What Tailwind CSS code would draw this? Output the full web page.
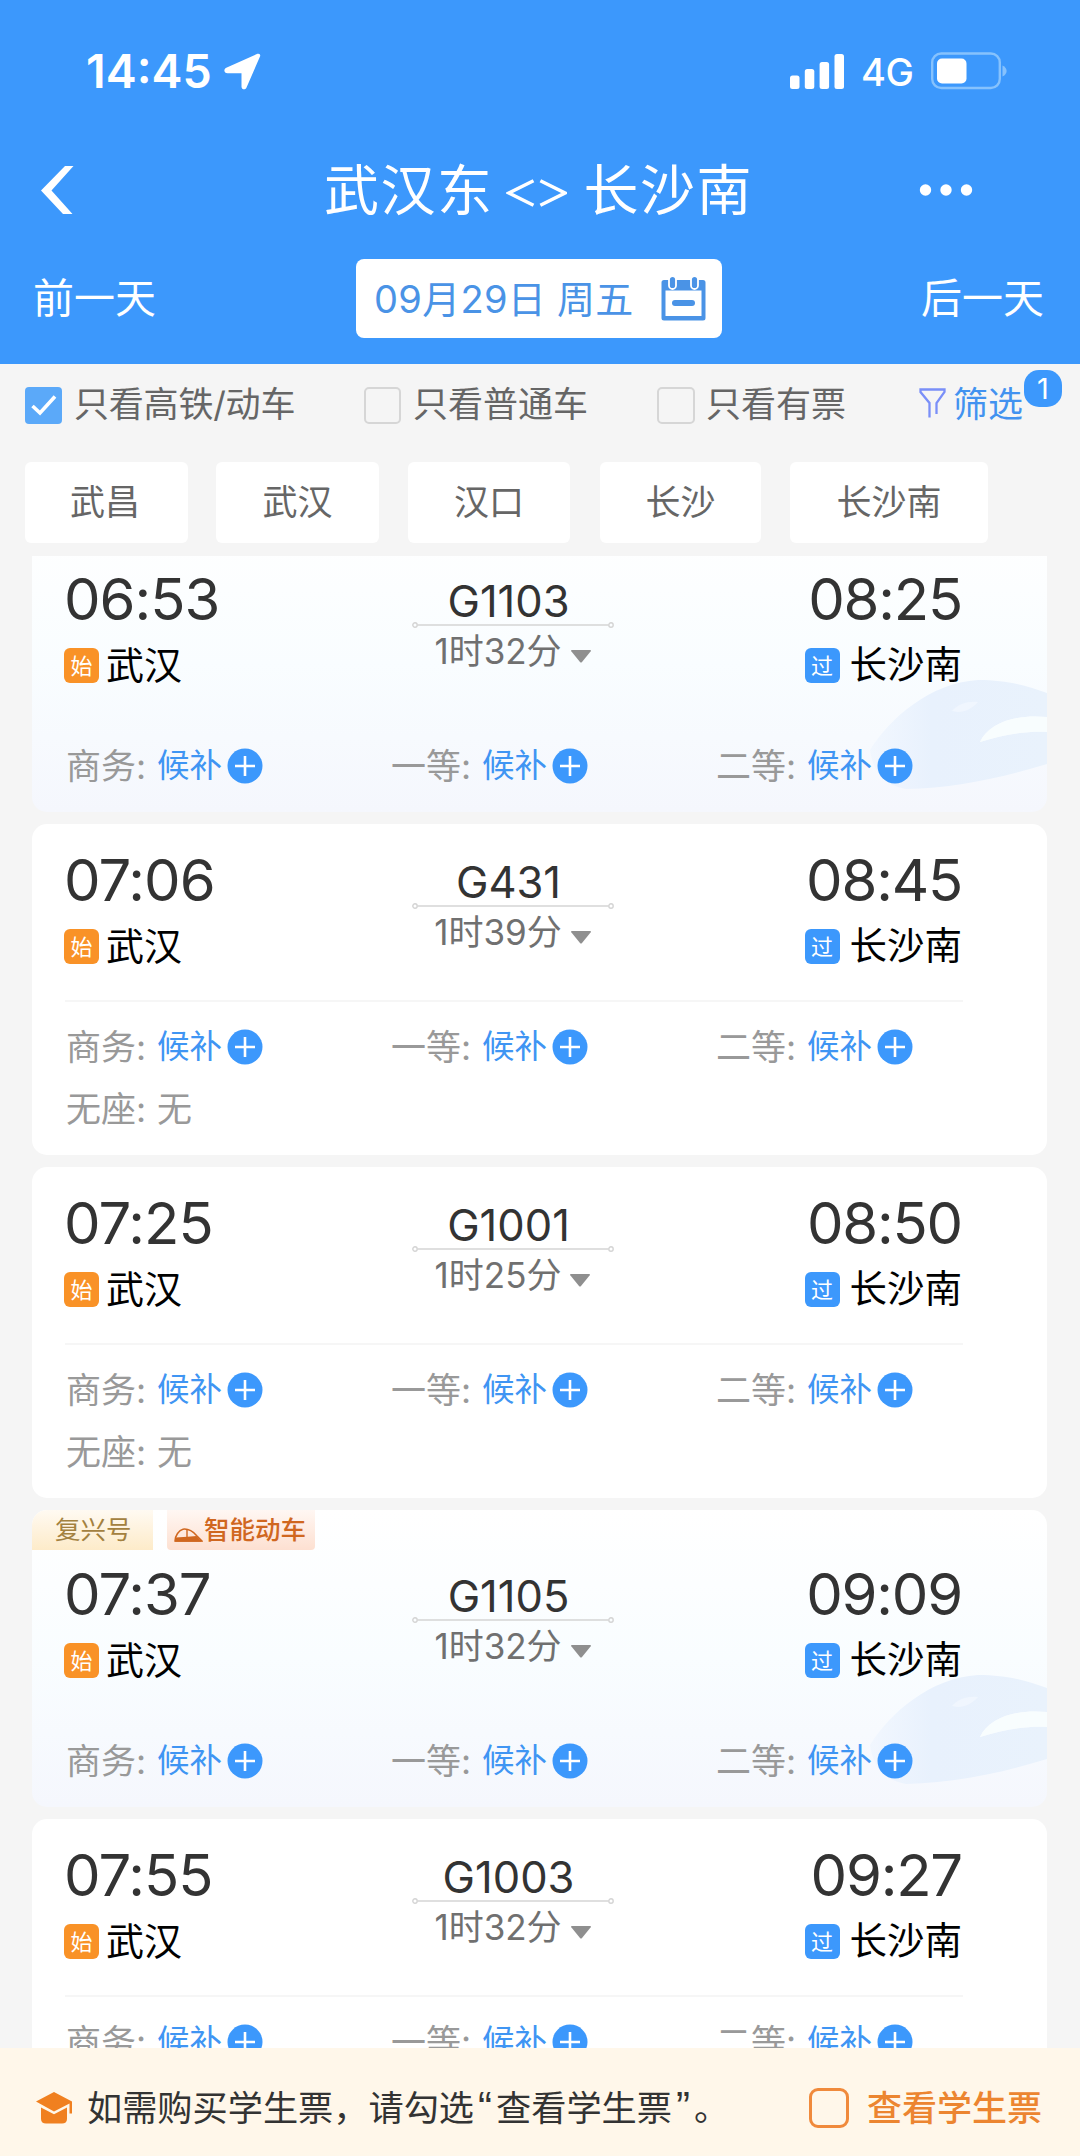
<!DOCTYPE html>
<html lang="zh-CN">
<head>
<meta charset="utf-8">
<title>车票查询</title>
<script src="https://cdn.jsdelivr.net/npm/@tailwindcss/browser@4"></script>
</head>
<body class="w-[1080px] h-[2156px] overflow-hidden bg-[#f5f5f5] font-['Inter','Noto_Sans_CJK_SC',sans-serif] leading-none font-normal flex flex-col">

<header class="h-[364px] shrink-0 bg-[#3c98fc] text-white flex flex-col">
  <!-- status bar -->
  <div class="h-[142px] pl-[86px] pr-[73px] flex items-center justify-between">
    <div class="flex items-center">
      <span class="w-[138px] text-[46.500px] font-semibold whitespace-nowrap">14:45</span>
      <svg class="w-[37px] h-[37px]" viewBox="0 0 37 37" fill="#fff"><path d="M33.500 .8c1.800-.6 3.200.7 2.600 2.500L22.300 35c-1 2.200-4.800 1.700-4.800-1.200V20.300H3.500C0 20.300-.8 16.300 2.300 14.800z"/></svg>
    </div>
    <div class="flex items-center">
      <svg class="w-[54px] h-[35px]" viewBox="0 0 54 35" fill="#fff"><rect x="0" y="21.500" width="9.500" height="13.500" rx="2.500"/><rect x="14.800" y="15" width="9.500" height="20" rx="2.500"/><rect x="29.600" y="8" width="9.500" height="27" rx="2.500"/><rect x="44.500" y="0" width="9.500" height="35" rx="2.500"/></svg>
      <span class="ml-[17px] pt-[2px] w-[70px] text-[38px] font-medium whitespace-nowrap tracking-[-0.5px]">4G</span>
      <svg class="w-[76px] h-[38px]" viewBox="0 0 76 38"><rect x="1.200" y="1.500" width="67.600" height="34.500" rx="9" fill="none" stroke="#86c2fd" stroke-width="2.400"/><rect x="6" y="6.500" width="29.500" height="25" rx="5" fill="#fff"/><path d="M71.500 13.500c5.500 2.500 5.500 8.500 0 11z" fill="#86c2fd"/></svg>
    </div>
  </div>
  <!-- title bar -->
  <div class="h-[96px] pl-[41px] pr-[107px] flex items-center">
    <svg class="w-[33px] h-[48px]" viewBox="0 0 33 48"><path d="M24 0h8.500L10.500 24.500 31.500 48H22L0 24.500z" fill="#fff"/></svg>
    <h1 class="ml-[250px] w-[429px] flex items-center text-[55px] whitespace-nowrap font-normal">
      <span class="w-[185px] tracking-[1.500px]">武汉东</span>
      <svg class="w-[63px] h-[28px] mt-[6px]" viewBox="0 0 63 28" fill="none" stroke="#fff" stroke-width="3.600"><path d="M28 1.500 3 14l25 12.500M35 1.500 60 14 35 26.500"/></svg>
      <span class="ml-[16px] tracking-[1.500px]">长沙南</span>
    </h1>
    <svg class="ml-auto w-[54px] h-[14px]" viewBox="0 0 54 14" fill="#fff"><circle cx="6.500" cy="7" r="5.700"/><circle cx="27" cy="7" r="5.700"/><circle cx="47.500" cy="7" r="5.700"/></svg>
  </div>
  <!-- day switcher -->
  <div class="h-[121px] pl-[33px] pr-[36px] flex items-center justify-between text-[41px]">
    <span class="w-[323px]">前一天</span>
    <div class="w-[366px] h-[79px] pl-[18px] pr-[16px] rounded-[8px] bg-white flex items-center justify-between text-[#4a93e6]">
      <span class="text-[38px] whitespace-nowrap tracking-[0.3px]">09月29日 周五</span>
      <svg class="w-[45px] h-[45px]" viewBox="0 0 45 45"><path d="M3 4h39a2.500 2.500 0 0 1 2.500 2.500V42a2.500 2.500 0 0 1-2.500 2.500H3A2.500 2.500 0 0 1 .5 42V6.500A2.500 2.500 0 0 1 3 4z" fill="#4a93e6"/><path d="M4.500 14.500h36V40h-36z" fill="#fff"/><rect x="11" y="24" width="23" height="6" rx="3" fill="#4a93e6"/><rect x="8" y="0" width="7" height="13" rx="3.500" fill="#4a93e6" stroke="#fff" stroke-width="1.800"/><rect x="30" y="0" width="7" height="13" rx="3.500" fill="#4a93e6" stroke="#fff" stroke-width="1.800"/></svg>
    </div>
    <span class="w-[322px] text-right">后一天</span>
  </div>
</header>

<!-- filters -->
<div class="h-[98px] pt-[23px] shrink-0 flex items-start text-[35px] text-[#666] whitespace-nowrap">
  <label class="ml-[25px] w-[339px] flex items-center">
    <svg class="w-[37px] h-[37px] mr-[12px]" viewBox="0 0 37 37"><rect width="37" height="37" rx="4" fill="#5ba9f9"/><path d="M7.500 19 15 26 30 9.500" fill="none" stroke="#fff" stroke-width="3.600"/></svg><span class="-mt-[2px] tracking-[-0.2px]">只看高铁/动车</span>
  </label>
  <label class="w-[293px] flex items-center"><i class="w-[37px] h-[37px] mr-[12px] border-[2.500px] border-[#d6d6d6] rounded-[5px]"></i><span class="-mt-[2px]">只看普通车</span></label>
  <label class="w-[262px] flex items-center"><i class="w-[38px] h-[37px] mr-[11px] border-[2.500px] border-[#d6d6d6] rounded-[5px]"></i><span class="-mt-[2px]">只看有票</span></label>
  <div class="relative h-[37px] flex items-center text-[#4292f0]">
    <svg class="w-[27px] h-[31px] mr-[7px] -mt-[4px]" viewBox="0 0 27 31" fill="none" stroke="#7a8ff8" stroke-width="2.300"><path d="M10.500 29.500V15L1.500 4V1.500h24V4l-8 11v11"/></svg><span class="-mt-[2px]">筛选</span>
    <b class="absolute left-[105px] -top-[17px] w-[38px] h-[37px] rounded-[15px] bg-[#3c98fc] text-white text-[29px] font-normal flex items-center justify-center">1</b>
  </div>
</div>

<!-- station chips -->
<div class="h-[81px] shrink-0 pl-[25px] flex text-[35px] text-[#666]">
  <div class="w-[163px] mr-[28px] pr-[3px] rounded-[6px] bg-white flex items-center justify-center">武昌</div>
  <div class="w-[163px] mr-[29px] rounded-[6px] bg-white flex items-center justify-center">武汉</div>
  <div class="w-[162px] mr-[30px] rounded-[6px] bg-white flex items-center justify-center">汉口</div>
  <div class="w-[161px] mr-[29px] rounded-[6px] bg-white flex items-center justify-center">长沙</div>
  <div class="w-[198px] rounded-[6px] bg-white flex items-center justify-center">长沙南</div>
</div>

<!-- train list -->
<main class="mt-[13px] h-[1492px] shrink-0 overflow-hidden">
  <div id="list" class="-mt-[41px] pl-[32px] pr-[33px] flex flex-col gap-[12px]"></div>
</main>

<!-- student ticket bar -->
<footer class="h-[108px] shrink-0 bg-[#fff7ea] pl-[36px] pr-[38px] pt-[12px] flex items-center justify-between whitespace-nowrap">
  <div class="flex items-center text-[35.200px] text-[#333]">
    <svg class="w-[36px] h-[32px] mr-[15px]" viewBox="0 0 36 32" fill="#f08020"><path d="M18 0 36 9.500V21.500h-2.500V11.500L18 19.500 0 9.500z"/><path d="M5 15.500 18 22.300 31 15.500V27c0 3-2 4.500-5 4.500H10c-3 0-5-1.500-5-4.500z"/></svg>
    <p>如需购买学生票，请勾选<span class="inline-block w-[22px] text-center text-[42px] leading-[35px] font-['Liberation_Sans']">“</span>查看学生票<span class="inline-block w-[22px] text-center text-[42px] leading-[35px] font-['Liberation_Sans']">”</span>。</p>
  </div>
  <label class="flex items-center text-[35px] font-medium text-[#ec8530]">
    <i class="w-[40px] h-[40px] mr-[18px] border-[3px] border-[#f08a3c] rounded-[9px]"></i>查看学生票
  </label>
</footer>

<script>
const trains = [
  {dep:'06:53', arr:'08:25', no:'G1103', dur:'1时32分', smart:true},
  {dep:'07:06', arr:'08:45', no:'G431', dur:'1时39分', noSeat:true},
  {dep:'07:25', arr:'08:50', no:'G1001', dur:'1时25分', noSeat:true},
  {dep:'07:37', arr:'09:09', no:'G1105', dur:'1时32分', smart:true},
  {dep:'07:55', arr:'09:27', no:'G1003', dur:'1时32分', noSeat:true},
];

const seat = name => `
  <div class="w-[325px] h-[62px] flex items-center text-[35px] text-[#999] whitespace-nowrap">
    <span class="w-[91px]">${name}:</span>
    <span class="w-[70px] text-[32.500px] text-[#3f95f3]">候补</span>
    <svg class="w-[36px] h-[36px]" viewBox="0 0 36 36"><circle cx="18" cy="18" r="17.500" fill="#3c98fc"/><path d="M8 18h20M18 8v20" stroke="#fff" stroke-width="2.600"/></svg>
  </div>`;

const tags = `
  <div class="absolute left-0 top-0 flex text-[25.500px] leading-none">
    <div class="w-[121px] h-[40px] mr-[14px] pl-[23px] rounded-tl-[14px] bg-linear-to-b from-[#fffaf2] to-[#fdebc9] text-[#a3813f] flex items-center">复兴号</div>
    <div class="w-[148px] h-[40px] pl-[7px] rounded-b-[4px] bg-linear-to-b from-[#fff7f3] to-[#fde0d1] text-[#d0671f] font-medium flex items-center">
      <svg class="w-[29px] h-[16px] mt-[11px] mr-[1px]" viewBox="0 0 29 16"><path d="M1 13C1 8 5 2 9 1.200c5-.6 10 2.300 13.500 6.300L28 13z" fill="none" stroke="#d0671f" stroke-width="1.500"/><path d="M1.500 9.500l12-.8 9-.6L28 13.800H1z" fill="#d0671f"/><path d="M13 1.500V9" stroke="#d0671f" stroke-width="1.400"/></svg>智能动车
    </div>
  </div>`;

const watermark = `
  <svg class="absolute right-0 bottom-[22px] w-[177px] h-[110px]" viewBox="0 0 177 110"><defs><linearGradient id="nose"><stop offset="0" stop-color="#e9f2fe" stop-opacity=".4"/><stop offset=".35" stop-color="#e8f1fd"/><stop offset="1" stop-color="#e9f2fc"/></linearGradient></defs><path d="M0 70C20 38 60 3 108 0c30 0 50 6 69 13v24c-32-3-58 6-67 25 22-7 44-11 67-10v32C130 98 85 108 36 109 20 106 4 98 0 70z" fill="url(#nose)"/><path d="M110 62c9-19 35-28 67-25v15c-23-1-45 3-67 10z" fill="#f8fdfe"/><path d="M82 31c6-7 16-10 26-9-5 6-13 10-20 10z" fill="#f0f6fe"/></svg>`;

document.getElementById('list').innerHTML = trains.map(t => `
  <section class="relative shrink-0 overflow-hidden rounded-[15px] px-[35px] pb-[15px] ${t.smart ? 'pt-[51px] bg-linear-to-b from-white via-[#f9fdff] to-[#f5f7fd]' : 'pt-[23px] bg-white'}">
    ${t.smart ? watermark + tags : ''}
    <div class="relative flex justify-between">
      <div class="-ml-[3px] w-[240px]">
        <div class="h-[64px] pt-[1px] flex items-center text-[58px] tracking-[-1px] text-[#333]">${t.dep}</div>
        <div class="h-[72px] flex items-center text-[38px] text-black"><b class="w-[35px] h-[35px] mr-[7px] -mt-[1px] rounded-[6px] bg-[#f99227] text-white text-[22px] font-normal flex items-center justify-center">始</b><span class="-mt-[3px]">武汉</span></div>
      </div>
      <div class="w-[202px] pt-[13px] mr-[1px] flex flex-col items-center">
        <div class="h-[44px] pt-[2px] pr-[8px] flex items-center text-[43.500px] text-[#333]">${t.no}</div>
        <svg class="w-[202px] h-[6px] -mt-[1px]" viewBox="0 0 202 6" fill="none" stroke="#d4d4d4" stroke-width="1.400"><path d="M5.500 3h191"/><circle cx="3" cy="3" r="2.200"/><circle cx="199" cy="3" r="2.200"/></svg>
        <div class="h-[46px] flex items-center text-[35px] text-[#707070] whitespace-nowrap">${t.dur}<svg class="w-[20px] h-[13px] ml-[9px] mt-[10px]" viewBox="0 0 20 13"><path d="M1 0h18q1.500 0 .7 1.300L11 12q-1 1.200-2 0L.3 1.300Q-.5 0 1 0z" fill="#8f8f8f"/></svg></div>
      </div>
      <div class="w-[240px] mr-[50px] flex flex-col items-end">
        <div class="h-[64px] pt-[1px] flex items-center text-[58px] tracking-[-1.200px] text-[#333]">${t.arr}</div>
        <div class="h-[72px] flex items-center text-[37.500px] text-black"><b class="w-[35px] h-[35px] mr-[10px] -mt-[1px] rounded-[6px] bg-[#3c98fc] text-white text-[22px] font-normal flex items-center justify-center">过</b><span class="-mt-[3px]">长沙南</span></div>
      </div>
    </div>
    <div class="mt-[17px] mb-[14px] -ml-[2px] w-[898px] h-[2px] ${t.smart ? '' : 'bg-[#f6f6f6]'}"></div>
    <div class="relative flex flex-wrap -ml-[1px] -mr-[35px]">
      ${seat('商务')}${seat('一等')}${seat('二等')}
      ${t.noSeat ? '<div class="w-[325px] h-[62px] flex items-center text-[35px] text-[#999]"><span class="w-[91px]">无座:</span>无</div>' : ''}
    </div>
  </section>`).join('');
</script>
</body>
</html>
